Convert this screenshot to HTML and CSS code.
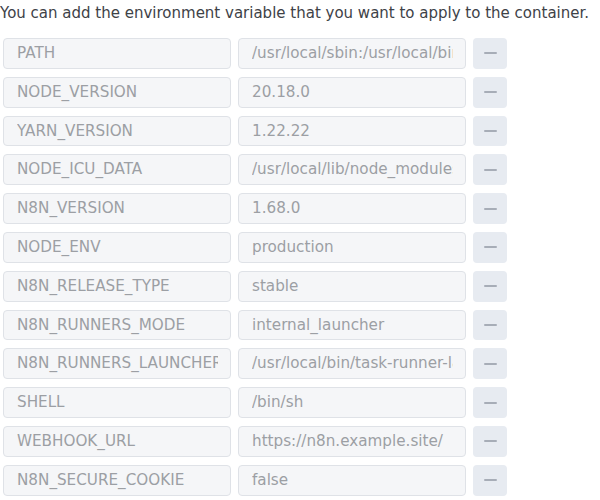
FILE: index.html
```html
<!DOCTYPE html>
<html>
<head>
<meta charset="utf-8">
<link rel="stylesheet" href="styles.css">
</head>
<body>
<div class="page">
  <p class="intro">You can add the environment variable that you want to apply to the container.</p>
  <div class="rows">
    <div class="row"><div class="field key"><span class="txt">PATH</span></div><div class="field val"><span class="txt">/usr/local/sbin:/usr/local/bin:/usr/sbin:/usr/bin:/sbin:/bin</span></div><button class="minus"><span></span></button></div>
    <div class="row"><div class="field key"><span class="txt">NODE_VERSION</span></div><div class="field val"><span class="txt">20.18.0</span></div><button class="minus"><span></span></button></div>
    <div class="row"><div class="field key"><span class="txt">YARN_VERSION</span></div><div class="field val"><span class="txt">1.22.22</span></div><button class="minus"><span></span></button></div>
    <div class="row"><div class="field key"><span class="txt">NODE_ICU_DATA</span></div><div class="field val"><span class="txt">/usr/local/lib/node_modules/full-icu</span></div><button class="minus"><span></span></button></div>
    <div class="row"><div class="field key"><span class="txt">N8N_VERSION</span></div><div class="field val"><span class="txt">1.68.0</span></div><button class="minus"><span></span></button></div>
    <div class="row"><div class="field key"><span class="txt">NODE_ENV</span></div><div class="field val"><span class="txt">production</span></div><button class="minus"><span></span></button></div>
    <div class="row"><div class="field key"><span class="txt">N8N_RELEASE_TYPE</span></div><div class="field val"><span class="txt">stable</span></div><button class="minus"><span></span></button></div>
    <div class="row"><div class="field key"><span class="txt">N8N_RUNNERS_MODE</span></div><div class="field val"><span class="txt">internal_launcher</span></div><button class="minus"><span></span></button></div>
    <div class="row"><div class="field key"><span class="txt">N8N_RUNNERS_LAUNCHER_PATH</span></div><div class="field val"><span class="txt">/usr/local/bin/task-runner-launcher</span></div><button class="minus"><span></span></button></div>
    <div class="row"><div class="field key"><span class="txt">SHELL</span></div><div class="field val"><span class="txt">/bin/sh</span></div><button class="minus"><span></span></button></div>
    <div class="row"><div class="field key"><span class="txt">WEBHOOK_URL</span></div><div class="field val"><span class="txt">https://n8n.example.site/</span></div><button class="minus"><span></span></button></div>
    <div class="row"><div class="field key"><span class="txt">N8N_SECURE_COOKIE</span></div><div class="field val"><span class="txt">false</span></div><button class="minus"><span></span></button></div>
  </div>
</div>
</body>
</html>
```
FILE: styles.css
```css
html, body {
  margin: 0;
  padding: 0;
  background: #ffffff;
}
.page {
  font-family: "DejaVu Sans", Verdana, sans-serif;
}
.intro {
  margin: 0;
  padding: 4px 0 0 0;
  height: 33px;
  box-sizing: border-box;
  font-size: 15px;
  color: #3e4247;
  white-space: nowrap;
}
.rows {
  display: flex;
  flex-direction: column;
  gap: 8px;
  padding-left: 3px;
  padding-top: 5px;
}
.row {
  display: flex;
  gap: 7px;
  height: 30.8px;
}
.field {
  box-sizing: border-box;
  height: 100%;
  background: #f5f6f8;
  border: 1px solid #dfe2e7;
  border-radius: 4px;
  padding: 0 12px 0 13px;
  font-size: 15.2px;
  line-height: 28.8px;
  color: #9c9fa4;
}
.txt {
  display: block;
  white-space: nowrap;
  overflow: hidden;
}
.key { width: 228px; }
.val { width: 228px; }
.minus {
  width: 34px;
  height: 100%;
  border: none;
  border-radius: 4px;
  background: #e7ebf1;
  padding: 0;
  display: flex;
  align-items: center;
  justify-content: center;
}
.minus span {
  display: block;
  width: 13px;
  height: 2px;
  background: #a7adb7;
  border-radius: 1px;
}
```
